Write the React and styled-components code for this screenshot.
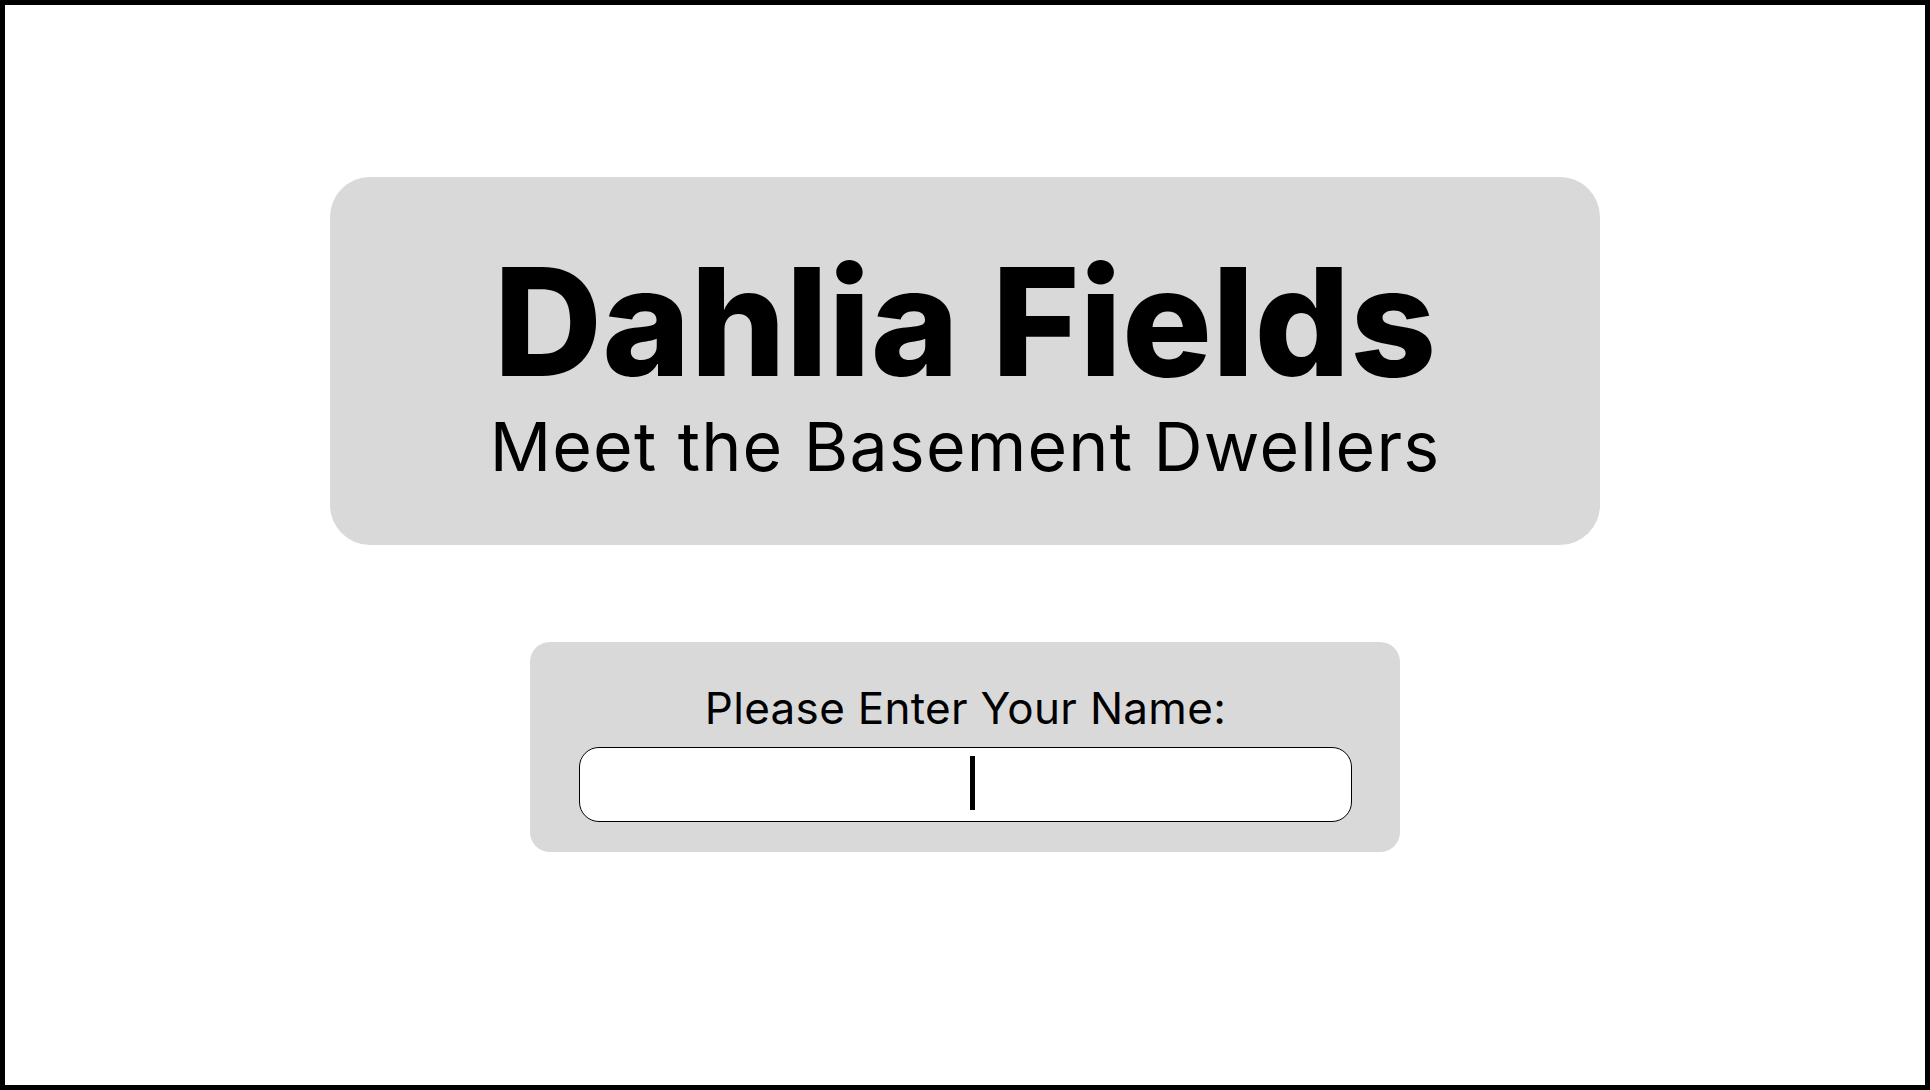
import React from 'react';
import styled, { createGlobalStyle } from 'styled-components';

const GlobalStyle = createGlobalStyle`
  html, body {
    margin: 0;
    padding: 0;
    background: #ffffff;
  }
  * {
    box-sizing: border-box;
  }
`;

export default function App() {
  return (
    <>
      <GlobalStyle />
      <Frame>
        <TitleCard>
          <Title>Dahlia Fields</Title>
          <Subtitle>Meet the Basement Dwellers</Subtitle>
        </TitleCard>

        <NameCard>
          <Label htmlFor="name">Please Enter Your Name:</Label>
          <Field>
            <NameInput id="name" type="text" />
            <Caret />
          </Field>
        </NameCard>
      </Frame>
    </>
  );
}

const Frame = styled.main`
  width: 100%;
  height: 1090px;
  border: 5px solid #000000;
  background: #ffffff;
  display: flex;
  flex-direction: column;
  align-items: center;
  padding-top: 172px;
  font-family: Inter, "Noto Sans", sans-serif;
  color: #000000;
`;

const TitleCard = styled.section`
  width: 1270px;
  height: 368px;
  padding-top: 70px;
  background: #d9d9d9;
  border-radius: 40px;
  display: flex;
  flex-direction: column;
  align-items: center;
  gap: 15px;
`;

const Title = styled.h1`
  margin: 0;
  font-size: 150px;
  line-height: 1;
  font-weight: 800;
  letter-spacing: 0;
`;

const Subtitle = styled.h2`
  margin: 0;
  font-size: 68px;
  line-height: 1;
  font-weight: 400;
  letter-spacing: 1.2px;
`;

const NameCard = styled.section`
  width: 870px;
  height: 210px;
  margin-top: 97px;
  padding: 44px 48px 0 49px;
  background: #d9d9d9;
  border-radius: 20px;
  display: flex;
  flex-direction: column;
  align-items: center;
  gap: 17px;
`;

const Label = styled.label`
  font-size: 44px;
  line-height: 1;
  font-weight: 400;
  letter-spacing: 0.3px;
`;

const Field = styled.div`
  position: relative;
  width: 100%;
  height: 75px;
`;

const NameInput = styled.input`
  width: 100%;
  height: 100%;
  border: 1px solid #000000;
  border-radius: 20px;
  background: #ffffff;
  font-family: inherit;
  font-size: 44px;
  text-align: center;
  outline: none;
`;

const Caret = styled.span`
  position: absolute;
  left: 391px;
  top: 9px;
  width: 5px;
  height: 54px;
  background: #000000;
  pointer-events: none;
`;
